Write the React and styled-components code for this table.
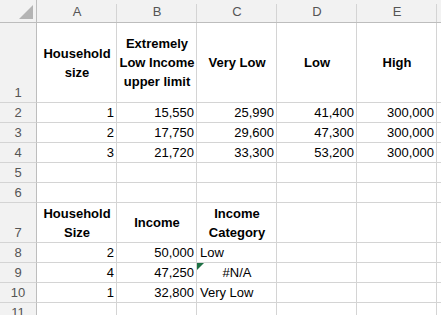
import React from 'react';
import styled, {createGlobalStyle} from 'styled-components';

const GlobalStyle = createGlobalStyle`
  html, body {
    margin: 0;
    padding: 0;
    background: #ffffff;
    overflow: hidden;
  }
  body {
    font-family: "Liberation Sans", Arial, sans-serif;
  }
`;

const Sheet = styled.div`
  display: grid;
  grid-template-columns: 37px repeat(5, 80px) 1fr;
  grid-template-rows: 23px 80px repeat(5, 20px) 40px repeat(4, 20px);
  width: 441px;
  height: 315px;
  overflow: hidden;
  font-size: 13px;
  color: #000;
`;

const Corner = styled.div`
  background: #f2f2f2;
  border-right: 1px solid #bdbdbd;
  border-bottom: 1px solid #bdbdbd;
  display: flex;
  align-items: flex-end;
  justify-content: flex-end;
  padding: 0 3px 3px 0;
  box-sizing: border-box;
`;

const ColHeader = styled.div`
  position: relative;
  background: #f2f2f2;
  border-bottom: 1px solid #bdbdbd;
  color: #555;
  display: flex;
  align-items: center;
  justify-content: center;
  padding-top: 1px;
  box-sizing: border-box;

  &::after {
    content: '';
    position: absolute;
    right: 0;
    top: 4px;
    bottom: 0;
    width: 1px;
    background: #d4d4d4;
  }
`;

const RowHeader = styled.div`
  background: #f2f2f2;
  border-right: 1px solid #bdbdbd;
  border-bottom: 1px solid #d4d4d4;
  color: #555;
  display: flex;
  align-items: flex-end;
  justify-content: center;
  line-height: 19px;
  box-sizing: border-box;
`;

const Cell = styled.div`
  position: relative;
  border-right: 1px solid #d4d4d4;
  border-bottom: 1px solid #d4d4d4;
  box-sizing: border-box;
  display: flex;
  align-items: ${({$middle}) => ($middle ? 'center' : 'flex-end')};
  justify-content: ${({$align}) =>
    $align === 'right' ? 'flex-end' : $align === 'center' ? 'center' : 'flex-start'};
  text-align: ${({$align}) => $align || 'left'};
  padding: 0 2px 0 3px;
  font-weight: ${({$bold}) => ($bold ? 700 : 400)};
  line-height: 19px;
  white-space: nowrap;
`;

const ErrorFlag = styled.span`
  position: absolute;
  left: 0;
  top: 0;
  width: 0;
  height: 0;
  border-top: 7px solid #1e7145;
  border-right: 7px solid transparent;
`;

const cols = ['A', 'B', 'C', 'D', 'E', ''];

const rows = [
  {
    n: 1,
    cells: [
      {v: ['Household', 'size'], bold: true, align: 'center', middle: true},
      {v: ['Extremely', 'Low Income', 'upper limit'], bold: true, align: 'center', middle: true},
      {v: ['Very Low'], bold: true, align: 'center', middle: true},
      {v: ['Low'], bold: true, align: 'center', middle: true},
      {v: ['High'], bold: true, align: 'center', middle: true},
    ],
  },
  {n: 2, cells: [{v: ['1'], align: 'right'}, {v: ['15,550'], align: 'right'}, {v: ['25,990'], align: 'right'}, {v: ['41,400'], align: 'right'}, {v: ['300,000'], align: 'right'}]},
  {n: 3, cells: [{v: ['2'], align: 'right'}, {v: ['17,750'], align: 'right'}, {v: ['29,600'], align: 'right'}, {v: ['47,300'], align: 'right'}, {v: ['300,000'], align: 'right'}]},
  {n: 4, cells: [{v: ['3'], align: 'right'}, {v: ['21,720'], align: 'right'}, {v: ['33,300'], align: 'right'}, {v: ['53,200'], align: 'right'}, {v: ['300,000'], align: 'right'}]},
  {n: 5, cells: []},
  {n: 6, cells: []},
  {
    n: 7,
    cells: [
      {v: ['Household', 'Size'], bold: true, align: 'center', middle: true},
      {v: ['Income'], bold: true, align: 'center', middle: true},
      {v: ['Income', 'Category'], bold: true, align: 'center', middle: true},
    ],
  },
  {n: 8, cells: [{v: ['2'], align: 'right'}, {v: ['50,000'], align: 'right'}, {v: ['Low']}]},
  {n: 9, cells: [{v: ['4'], align: 'right'}, {v: ['47,250'], align: 'right'}, {v: ['#N/A'], align: 'center', error: true}]},
  {n: 10, cells: [{v: ['1'], align: 'right'}, {v: ['32,800'], align: 'right'}, {v: ['Very Low']}]},
  {n: 11, cells: []},
];

const CornerMark = () => (
  <svg width="14" height="14" viewBox="0 0 14 14">
    <polygon points="14,0 14,14 0,14" fill="#b4b4b4" />
  </svg>
);

export default function App() {
  return (
    <>
      <GlobalStyle />
      <Sheet>
        <Corner>
          <CornerMark />
        </Corner>
        {cols.map((c, i) => (
          <ColHeader key={`h${i}`}>{c}</ColHeader>
        ))}
        {rows.map(row => (
          <React.Fragment key={row.n}>
            <RowHeader>{row.n}</RowHeader>
            {cols.map((_, i) => {
              const cell = row.cells[i];
              if (!cell) return <Cell key={i} />;
              return (
                <Cell key={i} $align={cell.align} $bold={cell.bold} $middle={cell.middle}>
                  {cell.error && <ErrorFlag />}
                  <div>
                    {cell.v.map((line, j) => (
                      <div key={j}>{line}</div>
                    ))}
                  </div>
                </Cell>
              );
            })}
          </React.Fragment>
        ))}
      </Sheet>
    </>
  );
}
